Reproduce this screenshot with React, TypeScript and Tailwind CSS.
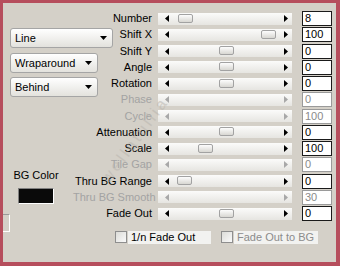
import React from "react";

const rows = [
  { label: "Number", value: "8", thumb: 20 },
  { label: "Shift X", value: "100", thumb: 103 },
  { label: "Shift Y", value: "0", thumb: 61 },
  { label: "Angle", value: "0", thumb: 61 },
  { label: "Rotation", value: "0", thumb: 61 },
  { label: "Phase", value: "0", thumb: null },
  { label: "Cycle", value: "100", thumb: null },
  { label: "Attenuation", value: "0", thumb: 61 },
  { label: "Scale", value: "100", thumb: 40 },
  { label: "Tile Gap", value: "0", thumb: null },
  { label: "Thru BG Range", value: "0", thumb: 19 },
  { label: "Thru BG Smooth", value: "30", thumb: null },
  { label: "Fade Out", value: "0", thumb: 61 },
];

function Dropdown({ text, width }: { text: string; width: string }) {
  return (
    <div
      className={`${width} h-[20px] flex items-center justify-between pl-[4px] pr-[5px] rounded-[3px] border border-[#a5a5a5] bg-gradient-to-b from-[#ffffff] to-[#e3e2dd] text-[11px] text-black whitespace-nowrap`}
    >
      <span>{text}</span>
      <svg width="7" height="4" viewBox="0 0 7 4">
        <path d="M0 0h7L3.5 4z" fill="#000" />
      </svg>
    </div>
  );
}

function Arrow({ dir, disabled }: { dir: "l" | "r"; disabled: boolean }) {
  return (
    <svg width="4" height="7" viewBox="0 0 4 7">
      <path
        d={dir === "l" ? "M4 0v7L0 3.5z" : "M0 0v7l4-3.5z"}
        fill={disabled ? "#a8a8a8" : "#000"}
      />
    </svg>
  );
}

function SliderRow({ label, value, thumb }: { label: string; value: string; thumb: number | null }) {
  const disabled = thumb === null;
  return (
    <div className="flex items-center h-[16.25px]">
      <div
        className={`w-[79px] text-right text-[11px] leading-none whitespace-nowrap ${disabled ? "text-[#a3a3a3]" : "text-black"}`}
      >
        {label}
      </div>
      <div className="ml-[6px] w-[134px] h-[12px] relative flex items-center justify-between pl-[7px] pr-[4px] bg-gradient-to-b from-[#fbfbfa] to-[#e6e5e1]">
        <Arrow dir="l" disabled={disabled} />
        <Arrow dir="r" disabled={disabled} />
        {thumb !== null && (
          <div
            className="absolute top-[1px] w-[15px] h-[9px] rounded-[2px] border border-[#a2a2a2] bg-gradient-to-b from-[#fdfdfd] to-[#d8d7d2]"
            style={{ left: thumb }}
          />
        )}
      </div>
      <div
        className={`ml-[10px] w-[30px] h-[15px] bg-white border flex items-center pl-[2px] text-[11px] leading-none ${disabled ? "border-[#9a9a9a] text-[#8a8a8a]" : "border-[#1a1a1a] text-black"}`}
      >
        {value}
      </div>
    </div>
  );
}

function Check({ label, disabled }: { label: string; disabled?: boolean }) {
  return (
    <div className="flex items-center">
      <div className="w-[12px] h-[12px] border border-[#8e8e8e] bg-gradient-to-br from-[#dcdcd8] to-[#fafafa]" />
      <div
        className={`ml-[1px] h-[13px] flex items-center pl-[3px] bg-[#f2f2f0] text-[11px] leading-none whitespace-nowrap ${disabled ? "text-[#8c8c8c] w-[84px]" : "text-black w-[83px]"}`}
      >
        {label}
      </div>
    </div>
  );
}

export default function App() {
  return (
    <div
      className="w-[340px] h-[266px] bg-[#b64e5d] pt-[3px] pl-[3px] pr-[4px] pb-[4px]"
      style={{ fontFamily: '"Liberation Sans", Arial, sans-serif' }}
    >
      <div className="w-full h-full bg-[#d4d0c8] relative overflow-hidden flex">
        {/* left column */}
        <div className="w-[70px] shrink-0 flex flex-col">
          <div className="ml-[7px] mt-[25px]">
            <Dropdown text="Line" width="w-[103px]" />
          </div>
          <div className="ml-[7px] mt-[5px]">
            <Dropdown text="Wraparound" width="w-[88px]" />
          </div>
          <div className="ml-[7px] mt-[4px]">
            <Dropdown text="Behind" width="w-[88px]" />
          </div>
          <div className="ml-[8px] mt-[73px] w-[50px] text-center text-[11px] text-black leading-none whitespace-nowrap">
            BG Color
          </div>
          <div className="ml-[15px] mt-[7px] w-[36px] h-[16px] border border-t-[#808080] border-l-[#808080] border-r-white border-b-white bg-[#0a0a0a]" />
          <div className="mt-[10px] w-[7px] h-[18px] border-t border-t-[#9a9a9a] border-r border-b border-r-white border-b-white" />
        </div>

        {/* slider rows + options */}
        <div className="flex flex-col pt-[7.4px]">
          {rows.map((r) => (
            <SliderRow key={r.label} {...r} />
          ))}
          <div className="flex gap-[10px] ml-[42px] mt-[9px]">
            <Check label="1/n Fade Out" />
            <Check label="Fade Out to BG" disabled />
          </div>
        </div>

        {/* watermark */}
        <div className="absolute left-[69px] top-[127px] w-[126px] h-[20px] text-center -rotate-[54deg] text-[16px] leading-[20px] tracking-[3px] text-[#b8b4ad] opacity-50 whitespace-nowrap select-none pointer-events-none">
          wellatullia
        </div>
      </div>
    </div>
  );
}
